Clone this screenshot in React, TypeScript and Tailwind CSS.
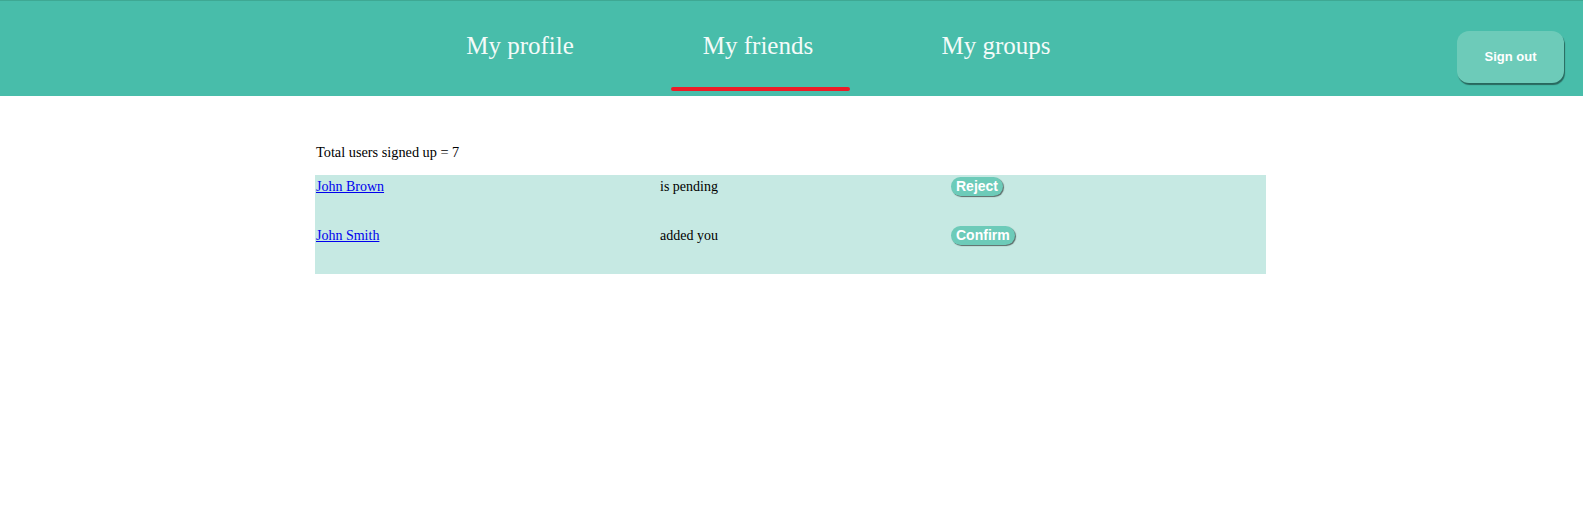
import React from 'react'

const navItems = [
  { label: 'My profile', active: false },
  { label: 'My friends', active: true },
  { label: 'My groups', active: false },
]

const friends = [
  { name: 'John Brown', status: 'is pending', action: 'Reject' },
  { name: 'John Smith', status: 'added you', action: 'Confirm' },
]

export default function App() {
  return (
    <div className="min-h-screen bg-white">
      {/* Top bar */}
      <header className="flex h-[96px] border-t border-[#3ea893] bg-[#48bdaa]">
        <nav className="flex pl-[401px]">
          {navItems.map((item) => (
            <div key={item.label} className="flex w-[238px] flex-col items-center">
              <a
                href="#"
                className="mt-[32px] font-['Liberation_Serif',serif] text-[25px] leading-[25px] text-[#f4fbf9]"
              >
                {item.label}
              </a>
              {item.active && <div className="ml-[4px] mt-auto mb-[5px] h-[4px] w-[179px] rounded-full bg-[#ec1c27]" />}
            </div>
          ))}
        </nav>
        <button className="ml-auto mr-[19px] mt-[30px] flex h-[52px] w-[107px] items-center justify-center rounded-[12px] bg-[#6dcbb9] font-['Liberation_Sans',Arial,sans-serif] text-[13px] font-bold text-white shadow-[1px_2px_1px_rgba(0,0,0,0.45)]">
          Sign out
        </button>
      </header>

      {/* Friends list */}
      <main className="ml-[315px] mt-[48px] w-[951px] font-['Liberation_Serif',serif] text-[14px] text-black">
        <p className="mb-[15px] pl-px text-[14.3px] leading-[16px]">Total users signed up = 7</p>
        <div className="bg-[#c6e9e3] pb-px">
          {friends.map((f) => (
            <div key={f.name} className="grid h-[49px] grid-cols-[345px_291px_1fr] items-baseline pt-px">
              <a href="#" className="pl-px leading-[16px] text-[#0000ee] underline">
                {f.name}
              </a>
              <span className="leading-[16px]">{f.status}</span>
              <div>
                <button className="rounded-full bg-[#6dcbb9] px-[5px] py-px font-['Liberation_Sans',Arial,sans-serif] text-[14px] font-bold leading-[17px] text-white shadow-[1px_1px_1px_rgba(0,0,0,0.55)]">
                  {f.action}
                </button>
              </div>
            </div>
          ))}
        </div>
      </main>
    </div>
  )
}
